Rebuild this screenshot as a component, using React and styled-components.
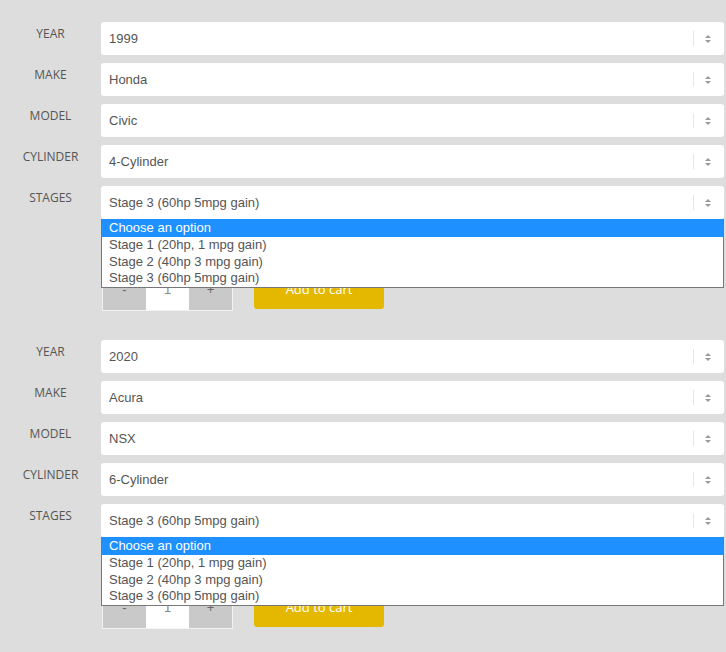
import styled, { createGlobalStyle } from "styled-components";

const GlobalStyle = createGlobalStyle`
  body {
    margin: 0;
    background: #dddddd;
    font-family: "Liberation Sans", Arial, sans-serif;
  }
`;

const Page = styled.div`
  padding: 22px 2px 0 0;
  display: flex;
  flex-direction: column;
  gap: 29px;
`;

const Block = styled.div`
  display: flex;
  flex-direction: column;
`;

const FieldGrid = styled.div`
  display: grid;
  grid-template-columns: 101px 1fr;
  row-gap: 8px;
`;

const Label = styled.div`
  text-align: center;
  font-family: "Open Sans", sans-serif;
  font-size: 12px;
  color: #555;
  padding-top: 3px;
  text-transform: uppercase;
`;

const Select = styled.div`
  position: relative;
  height: 33px;
  background: #fff;
  border-radius: 3px;
  display: flex;
  align-items: center;
  padding-left: 8px;
  font-size: 13px;
  color: #555;
`;

const Value = styled.span`
  flex: 1;
`;

const ArrowBox = styled.div`
  width: 31px;
  height: 15px;
  border-left: 1px solid #e6e6e6;
  display: flex;
  align-items: center;
  justify-content: center;
  padding-right: 2px;
  box-sizing: border-box;
`;

const Dropdown = styled.ul`
  position: absolute;
  top: 100%;
  left: 0;
  right: 0;
  margin: 0;
  padding: 0;
  list-style: none;
  background: #fff;
  border: 1px solid #777;
  border-top: none;
  z-index: 2;
`;

const Option = styled.li`
  height: ${(p) => (p.$active ? "18px" : "16.6px")};
  line-height: ${(p) => (p.$active ? "18px" : "16.6px")};
  padding: 0 7px;
  font-size: 13px;
  color: ${(p) => (p.$active ? "#fff" : "#555")};
  background: ${(p) => (p.$active ? "#1e90ff" : "transparent")};
`;

const Actions = styled.div`
  display: flex;
  align-items: flex-start;
  gap: 21px;
  margin: 48px 0 0 102px;
`;

const Qty = styled.div`
  display: flex;
  border: 1px solid #f2f2f2;
`;

const QtyCell = styled.div`
  width: 43px;
  height: 42px;
  display: flex;
  align-items: center;
  justify-content: center;
  font-size: 13px;
  color: ${(p) => (p.$input ? "#888" : "#666")};
  background: ${(p) => (p.$input ? "#fff" : "#c9c9c9")};
`;

const AddToCart = styled.button`
  width: 130px;
  height: 41px;
  margin-top: 1px;
  border: none;
  border-radius: 3px;
  background: #e5b800;
  color: #fff;
  font-family: "Open Sans", sans-serif;
  font-size: 13px;
`;

const Arrows = () => (
  <svg width="8" height="10" viewBox="0 0 8 10">
    <path d="M4 1 L7 4 L1 4 Z" fill="#999" />
    <path d="M4 9 L7 6 L1 6 Z" fill="#999" />
  </svg>
);

const options = [
  "Stage 1 (20hp, 1 mpg gain)",
  "Stage 2 (40hp 3 mpg gain)",
  "Stage 3 (60hp 5mpg gain)",
];

const Field = ({ label, value, open }) => (
  <>
    <Label>{label}</Label>
    <Select>
      <Value>{value}</Value>
      <ArrowBox>
        <Arrows />
      </ArrowBox>
      {open && (
        <Dropdown>
          <Option $active>Choose an option</Option>
          {options.map((o) => (
            <Option key={o}>{o}</Option>
          ))}
        </Dropdown>
      )}
    </Select>
  </>
);

const cars = [
  { year: "1999", make: "Honda", model: "Civic", cyl: "4-Cylinder" },
  { year: "2020", make: "Acura", model: "NSX", cyl: "6-Cylinder" },
];

export default function App() {
  return (
    <>
      <GlobalStyle />
      <Page>
        {cars.map((c) => (
          <Block key={c.year}>
            <FieldGrid>
              <Field label="Year" value={c.year} />
              <Field label="Make" value={c.make} />
              <Field label="Model" value={c.model} />
              <Field label="Cylinder" value={c.cyl} />
              <Field label="Stages" value="Stage 3 (60hp 5mpg gain)" open />
            </FieldGrid>
            <Actions>
              <Qty>
                <QtyCell>-</QtyCell>
                <QtyCell $input>1</QtyCell>
                <QtyCell>+</QtyCell>
              </Qty>
              <AddToCart>Add to cart</AddToCart>
            </Actions>
          </Block>
        ))}
      </Page>
    </>
  );
}
